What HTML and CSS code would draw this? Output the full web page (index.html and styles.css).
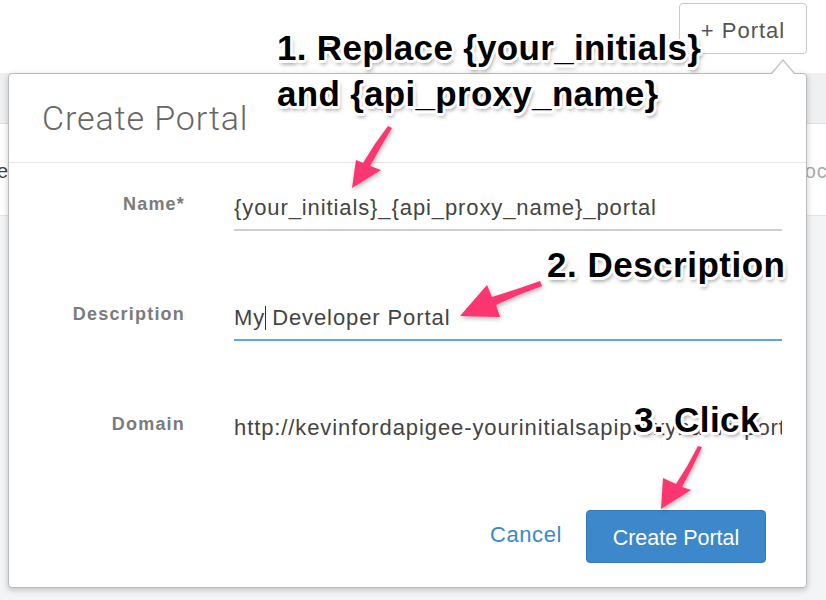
FILE: index.html
```html
<!DOCTYPE html>
<html lang="en">
<head>
<meta charset="utf-8">
<title>Create Portal</title>
<link rel="stylesheet" href="styles.css">
</head>
<body>
<div class="page">
  <header class="topbar">
    <button class="add-btn" type="button">+ Portal</button>
  </header>
  <nav class="navband"></nav>
  <div class="subband">
    <span class="sub-left">el</span>
    <span class="sub-right">ocu</span>
  </div>
  <div class="rest"></div>

  <section class="popover">
    <div class="pop-head">
      <h2 class="pop-title">Create Portal</h2>
    </div>
    <div class="pop-body">
      <div class="form-grid">
        <label class="f-label">Name*</label>
        <div class="f-input">{your_initials}_{api_proxy_name}_portal</div>
        <label class="f-label">Description</label>
        <div class="f-input f-active">My<span class="caret"></span> Developer Portal</div>
        <label class="f-label">Domain</label>
        <div class="f-input f-plain">http://kevinfordapigee-yourinitialsapiproxyname-portal.example</div>
      </div>
      <div class="pop-foot">
        <a class="cancel">Cancel</a>
        <button class="primary" type="button">Create Portal</button>
      </div>
    </div>
  </section>

  <svg class="arrows" width="826" height="600" viewBox="0 0 826 600" xmlns="http://www.w3.org/2000/svg">
    <path d="M388,126 L392,128 Q381,146 370,166 L381,170 L352,188 L356,160 L363,163 Q374,144 388,126 Z"/>
    <path d="M540,281 Q515,290 492,297 L487,285 L460,316 L500,317 L496,305 Q519,294 542,286 Z"/>
    <path d="M698,446 Q688,466 676,484 L663,478 L661,509 L691,490 L682,487 Q693,467 702,447 Z"/>
  </svg>

  <div class="note note1">1. Replace {your_initials}<br>and {api_proxy_name}</div>
  <div class="note note2">2. Description</div>
  <div class="note note3">3. Click</div>
</div>
</body>
</html>
```
FILE: styles.css
```css
* { box-sizing: border-box; }
html, body { margin: 0; padding: 0; }
body {
  width: 826px;
  height: 600px;
  overflow: hidden;
  font-family: "Liberation Sans", Arial, sans-serif;
  background: #f3f4f6;
}
.page {
  position: relative;
  width: 826px;
  height: 600px;
  display: flex;
  flex-direction: column;
}
.topbar {
  height: 73px;
  background: #fff;
  display: flex;
  justify-content: flex-end;
  align-items: flex-start;
  padding: 3px 19px 0 0;
}
.add-btn {
  width: 128px;
  height: 51px;
  background: #fff;
  border: 1px solid #c9c9c9;
  border-radius: 4px;
  font-family: "Liberation Sans", Arial, sans-serif;
  font-size: 22px;
  letter-spacing: 1px;
  color: #555;
  padding: 5px 0 0 0;
}
.navband {
  height: 51px;
  background: #eff0f2;
  border-bottom: 1px solid #e0e1e3;
}
.subband {
  height: 92px;
  background: #fff;
  border-bottom: 1px solid #e4e5e7;
  display: flex;
  justify-content: space-between;
  align-items: flex-start;
  padding-top: 36px;
  font-size: 20px;
}
.sub-left { color: #444; margin-left: -3px; }
.sub-right { color: #a9a9a9; letter-spacing: 1px; margin-right: -14px; }
.rest { flex: 1; background: #f3f4f6; }

.popover {
  position: absolute;
  left: 8px;
  top: 73px;
  width: 799px;
  background: #fff;
  border: 1px solid #bcbcbc;
  border-radius: 4px;
  box-shadow: 0 2px 6px rgba(0,0,0,0.22);
}
.popover::before,
.popover::after {
  content: "";
  position: absolute;
  width: 0;
  height: 0;
  border-style: solid;
  border-color: transparent;
}
.popover::before {
  left: 762px;
  top: -15px;
  border-width: 0 12px 14px 12px;
  border-bottom-color: #c2c2c2;
}
.popover::after {
  left: 763px;
  top: -13px;
  border-width: 0 11px 13px 11px;
  border-bottom-color: #fff;
}
.pop-head {
  height: 89px;
  border-bottom: 1px solid #e6e6e6;
  padding: 24px 0 0 33px;
}
.pop-title {
  margin: 0;
  font-family: Roboto, "Liberation Sans", sans-serif;
  font-weight: 300;
  font-size: 34px;
  line-height: 40px;
  letter-spacing: 0.9px;
  color: #666;
}
.pop-body {
  padding: 24px 0 24px 0;
}
.form-grid {
  display: grid;
  grid-template-columns: 176px 548px;
  column-gap: 49px;
  row-gap: 66px;
}
.f-label {
  text-align: right;
  font-weight: bold;
  font-size: 18px;
  letter-spacing: 1.2px;
  color: #7b7b7b;
  line-height: 34px;
}
.f-input {
  height: 44px;
  line-height: 42px;
  font-size: 22px;
  letter-spacing: 0.9px;
  color: #444;
  border-bottom: 2px solid #cfcfcf;
  white-space: nowrap;
  overflow: hidden;
}
.f-active { border-bottom-color: #5aa6e0; }
.f-plain { border-bottom-color: transparent; }
.caret {
  display: inline-block;
  width: 0;
  height: 24px;
  border-left: 1.5px solid #333;
  vertical-align: -5px;
  margin-right: -1px;
}
.pop-foot {
  margin-top: 59px;
  display: flex;
  justify-content: flex-end;
  align-items: center;
  gap: 24px;
  padding-right: 40px;
}
.cancel {
  font-size: 22px;
  letter-spacing: 0.6px;
  color: #3b88c9;
  padding-bottom: 4px;
}
.primary {
  width: 180px;
  height: 53px;
  background: #3d87cb;
  border: 1px solid #3479b9;
  border-radius: 4px;
  color: #fff;
  font-family: "Liberation Sans", Arial, sans-serif;
  font-size: 21.5px;
  padding: 3px 0 0 0;
}

.arrows {
  position: absolute;
  left: 0;
  top: 0;
  pointer-events: none;
  fill: #fd3672;
  filter: drop-shadow(1px 2px 2px rgba(0,0,0,0.3));
}
.note {
  position: absolute;
  font-family: "Liberation Sans", Arial, sans-serif;
  font-weight: bold;
  font-size: 35px;
  line-height: 46px;
  letter-spacing: 0.3px;
  color: #000;
  white-space: nowrap;
  text-shadow:
    2.5px 0 0 #fff, -2.5px 0 0 #fff, 0 2.5px 0 #fff, 0 -2.5px 0 #fff,
    2px 2px 0 #fff, -2px -2px 0 #fff, 2px -2px 0 #fff, -2px 2px 0 #fff,
    1px 2.5px 0 #fff, -1px 2.5px 0 #fff, 1px -2.5px 0 #fff, -1px -2.5px 0 #fff,
    2.5px 1px 0 #fff, 2.5px -1px 0 #fff, -2.5px 1px 0 #fff, -2.5px -1px 0 #fff,
    2px 4px 4px rgba(0,0,0,0.45);
}
.note1 { left: 277px; top: 25px; }
.note2 { left: 547px; top: 242px; letter-spacing: 0.5px; }
.note3 { left: 634px; top: 397px; letter-spacing: 0.4px; }
```
